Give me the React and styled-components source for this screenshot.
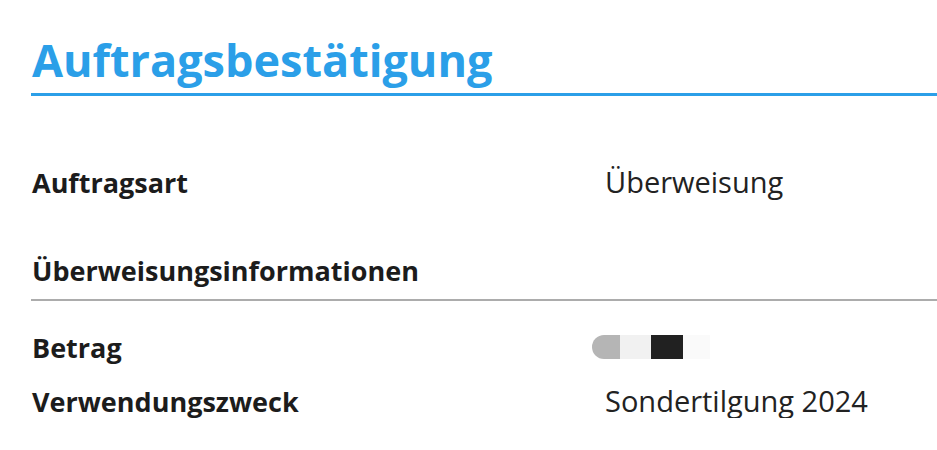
import React from 'react'
import styled, { createGlobalStyle } from 'styled-components'

const GlobalStyle = createGlobalStyle`
    body {
        margin: 0;
        background: #fff;
        font-family: "Open Sans", "Liberation Sans", sans-serif;
        color: #1c1c1c;
    }
`;

const Page = styled.div`
    padding: 32px 0 0 31px;
`;

const Title = styled.h1`
    margin: 0;
    padding: 0 0 5px 1px;
    font-size: 45px;
    font-weight: 700;
    line-height: 56px;
    color: #2b9fe8;
    border-bottom: 3px solid #2b9fe8;
`;

const Row = styled.div`
    display: grid;
    grid-template-columns: 574px 1fr;
    align-items: baseline;
    padding-top: ${props => props.top || 0}px;
    line-height: 32px;
`;

const Label = styled.div`
    font-size: 27px;
    font-weight: 700;
    padding-left: 1px;
`;

const Value = styled.div`
    font-size: 29px;
    font-weight: 400;
    color: #222;
`;

const SectionHead = styled.div`
    margin-top: 56px;
    font-size: 27px;
    font-weight: 700;
    line-height: 32px;
    padding: 0 0 12px 1px;
    border-bottom: 2px solid #acacac;
`;

const Mask = styled.div`
    display: flex;
    align-self: center;
    height: 24px;
    margin: -3px 0 0 -13px;
`;

const MaskPart = styled.span`
    width: ${props => props.w}px;
    height: 100%;
    background: ${props => props.bg};
    border-radius: ${props => props.round ? '12px 0 0 12px' : '0'};
`;

export default function App() {
    return (
        <Page>
            <GlobalStyle />
            <Title>Auftragsbestätigung</Title>
            <Row top={70}>
                <Label>Auftragsart</Label>
                <Value>Überweisung</Value>
            </Row>
            <SectionHead>Überweisungsinformationen</SectionHead>
            <Row top={31}>
                <Label>Betrag</Label>
                <Mask>
                    <MaskPart w={28} bg="#b5b5b5" round />
                    <MaskPart w={31} bg="#f1f1f1" />
                    <MaskPart w={32} bg="#212121" />
                    <MaskPart w={27} bg="#fafafa" />
                </Mask>
            </Row>
            <Row top={21}>
                <Label>Verwendungszweck</Label>
                <Value>Sondertilgung 2024</Value>
            </Row>
        </Page>
    )
}
